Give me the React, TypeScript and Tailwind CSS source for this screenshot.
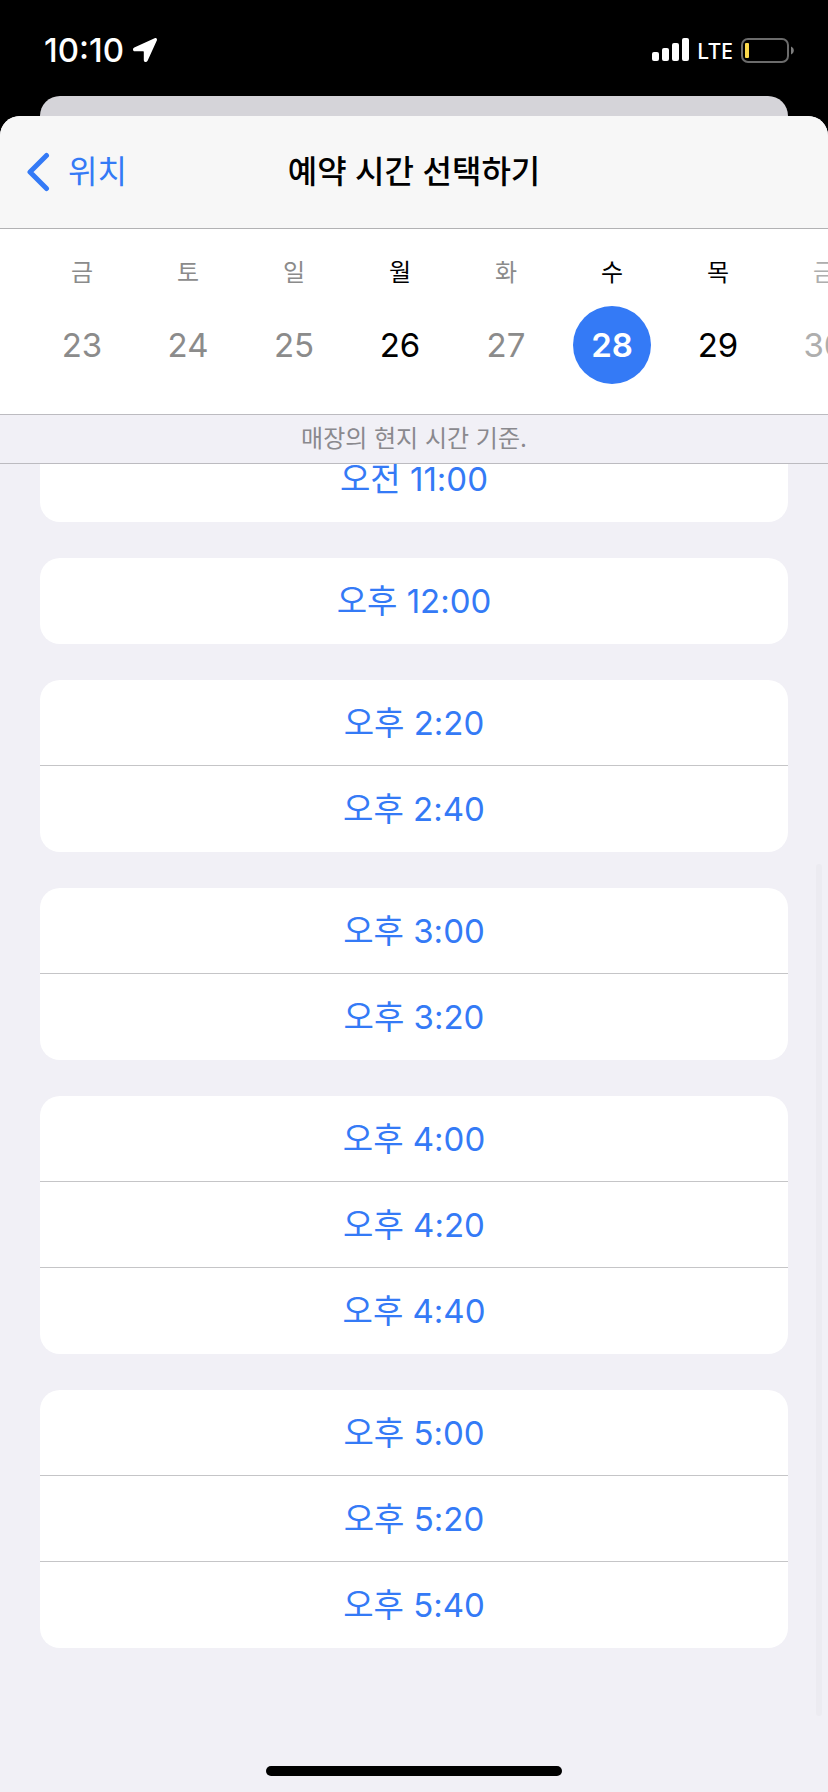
import React, { useState } from "react";
import clsx from "clsx";

type Day = { id: string; weekday: string; date: number; open: boolean; faded?: boolean };

const days: Day[] = [
  { id: "fri-23", weekday: "금", date: 23, open: false },
  { id: "sat-24", weekday: "토", date: 24, open: false },
  { id: "sun-25", weekday: "일", date: 25, open: false },
  { id: "mon-26", weekday: "월", date: 26, open: true },
  { id: "tue-27", weekday: "화", date: 27, open: false },
  { id: "wed-28", weekday: "수", date: 28, open: true },
  { id: "thu-29", weekday: "목", date: 29, open: true },
  { id: "fri-30", weekday: "금", date: 30, open: false, faded: true },
];

const slotGroups: string[][] = [
  ["오전 11:00"],
  ["오후 12:00"],
  ["오후 2:20", "오후 2:40"],
  ["오후 3:00", "오후 3:20"],
  ["오후 4:00", "오후 4:20", "오후 4:40"],
  ["오후 5:00", "오후 5:20", "오후 5:40"],
];

function StatusBar() {
  return (
    <div className="flex h-24 items-center justify-between pt-1 pr-[34px] pl-11 text-white">
      <div className="flex items-center gap-[9px]">
        <span className="text-[33px] leading-10 font-medium">10:10</span>
        <svg className="h-6 w-6" viewBox="0 0 24 24" fill="currentColor" aria-hidden="true">
          <path d="M21.600.3 1.300 9.400C-.6 10.300-.4 13.200 1.800 13.200H10.200c.4 0 .6.2.6.6V22c0 2.400 2.900 2.700 3.800.8L23.800 2.600C24.500 1 23.200-.4 21.600.3Z" />
        </svg>
      </div>
      <div className="flex items-center gap-2">
        <svg className="h-6 w-[37px]" viewBox="0 0 37 24" fill="currentColor" aria-hidden="true">
          <rect x="0" y="14" width="7" height="9" rx="2" />
          <rect x="10" y="10" width="7" height="13" rx="2" />
          <rect x="20" y="5" width="7" height="18" rx="2" />
          <rect x="30" y="0" width="7" height="23" rx="2" />
        </svg>
        <span className="font-['Noto_Sans',sans-serif] text-[22px] leading-8 font-medium">LTE</span>
        <svg className="h-[25px] w-[53px]" viewBox="0 0 53 25" aria-hidden="true">
          <rect x="1" y="1" width="46" height="23" rx="6" fill="none" stroke="#6b6b6b" strokeWidth="2" />
          <rect x="4" y="5" width="4" height="15" rx="1" fill="#fbd84b" />
          <path d="M50 8.500c1.700.700 2.800 2.200 2.800 4s-1.100 3.300-2.800 4Z" fill="#7d7d7d" />
        </svg>
      </div>
    </div>
  );
}

export default function App() {
  const [selected, setSelected] = useState("wed-28");

  return (
    <div className="flex min-h-screen flex-col overflow-hidden bg-black font-[Inter,'Noto_Sans_CJK_KR',sans-serif] text-black">
      <StatusBar />
      <div className="mx-10 h-5 rounded-t-[20px] bg-[#d5d4d9]" />
      <main className="relative flex grow flex-col overflow-hidden rounded-t-[20px] bg-[#f1f0f6]">
        <header className="grid h-[113px] grid-cols-[1fr_auto_1fr] items-center border-b border-[#b2b2b4] bg-[#f7f7f7] px-[26px]">
          <a href="#location" className="flex items-center gap-[18px] text-[#347af6]">
            <svg className="h-10 w-6" viewBox="0 0 24 40" fill="none" aria-hidden="true">
              <path d="M20.500 3.500 4 20l16.500 16.500" stroke="currentColor" strokeWidth="5" strokeLinecap="round" strokeLinejoin="round" />
            </svg>
            <span className="text-[32px] leading-10">위치</span>
          </a>
          <h1 className="text-[32px] leading-10 font-medium">예약 시간 선택하기</h1>
        </header>

        <nav aria-label="날짜" className="flex h-[186px] overflow-hidden border-b border-[#bcbbc0] bg-white pt-7 pl-[29px]">
          {days.map((day) => {
            const isSelected = day.id === selected;
            return (
              <button
                key={day.id}
                type="button"
                disabled={!day.open}
                aria-pressed={isSelected}
                onClick={() => setSelected(day.id)}
                className={clsx(
                  "flex w-[106px] shrink-0 flex-col items-center gap-[17px]",
                  day.open ? "text-black" : day.faded ? "text-[#aeaeae]" : "text-[#8b8b8b]",
                )}
              >
                <span className="text-2xl leading-8">{day.weekday}</span>
                <span
                  className={clsx(
                    "flex size-[78px] items-center justify-center rounded-full text-[33px] leading-10",
                    isSelected && "bg-[#347af6] font-semibold text-white",
                  )}
                >
                  {day.date}
                </span>
              </button>
            );
          })}
        </nav>

        <p className="border-b border-[#bcbbc0] text-center text-2xl leading-[48px] text-[#8a898e]">
          매장의 현지 시간 기준.
        </p>

        <div className="overflow-hidden px-10">
          <div className="-mt-7 flex flex-col gap-9">
            {slotGroups.map((group) => (
              <section key={group[0]} className="divide-y divide-[#c5c5c7] overflow-hidden rounded-[20px] bg-white">
                {group.map((slot) => (
                  <button key={slot} type="button" className="block h-[86px] w-full text-center text-[33px] leading-10 text-[#347af6]">
                    {slot}
                  </button>
                ))}
              </section>
            ))}
          </div>
        </div>

        <div className="mx-auto mt-auto mb-4 h-[10px] w-[296px] rounded-full bg-black" />
        <div className="absolute top-[748px] right-[6px] bottom-[76px] w-[6px] rounded-full bg-[#ecebf1]" />
      </main>
    </div>
  );
}
